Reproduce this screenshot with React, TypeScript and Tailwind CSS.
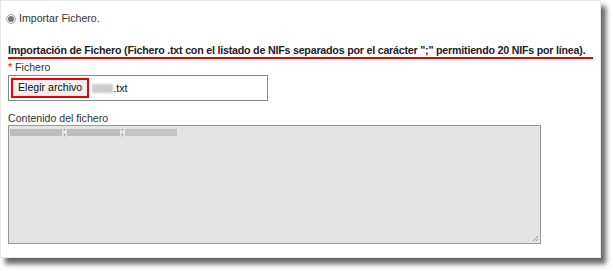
export default function App() {
  return (
    <div className="w-[613px] h-[271px] bg-white font-['Liberation_Sans',Arial,sans-serif] text-[10.6px] text-[#333]">
      <div className="w-[601px] h-[258px] bg-white border border-[#e8e8e8] shadow-[5px_6px_5px_rgba(0,0,0,0.6)] px-[7px] pt-[11px]">
        <label className="flex items-center gap-[3px] h-[14px] -ml-[2px]">
          <span className="w-[10px] h-[10px] rounded-full border border-[#aaa] bg-[#eee] flex items-center justify-center">
            <span className="w-[6px] h-[6px] rounded-full bg-[#777]" />
          </span>
          <span>Importar Fichero.</span>
        </label>

        <div className="mt-[17px] border-b-2 border-[#e00] pr-[6px] font-bold text-[#222] text-[10.7px] leading-[14px] whitespace-nowrap tracking-[-0.22px]">
          Importación de Fichero (Fichero .txt con el listado de NIFs separados por el carácter ";" permitiendo 20 NIFs por línea).
        </div>

        <div className="mt-[1px] leading-[14px]">
          <span className="text-[#e00]">*</span> Fichero
        </div>

        <div className="mt-[1px] w-[260px] h-[26px] border border-[#888] flex items-center pl-[2px]">
          <span className="border-2 border-[#e00] bg-[#efefef] h-[20px] px-[5px] flex items-center text-[#111] text-[10.6px]">
            Elegir archivo
          </span>
          <span className="ml-[3px] flex items-center text-[#111] text-[10.8px]">
            <span className="inline-block w-[21px] h-[9px] bg-[#ccc] blur-[1px]" />
            .txt
          </span>
        </div>

        <div className="mt-[10px] leading-[14px]">Contenido del fichero</div>

        <div className="relative w-[533px] h-[119px] bg-[#e4e4e4] border border-[#999] px-[1px] pt-[2px]">
          <div className="flex items-center gap-[1px] h-[8px]">
            <span className="w-[52px] h-[7px] bg-[#bdbdbd] blur-[0.6px]" />
            <span className="text-[10px] leading-none text-[#666]">;</span>
            <span className="w-[53px] h-[7px] bg-[#bdbdbd] blur-[0.6px]" />
            <span className="text-[10px] leading-none text-[#666]">;</span>
            <span className="w-[52px] h-[7px] bg-[#c4c4c4] blur-[0.6px]" />
          </div>
          <svg className="absolute right-[1px] bottom-[1px]" width="7" height="7" viewBox="0 0 7 7">
            <path d="M6 1L1 6M6 4L4 6" stroke="#999" strokeWidth="1" />
          </svg>
        </div>
      </div>
    </div>
  );
}
